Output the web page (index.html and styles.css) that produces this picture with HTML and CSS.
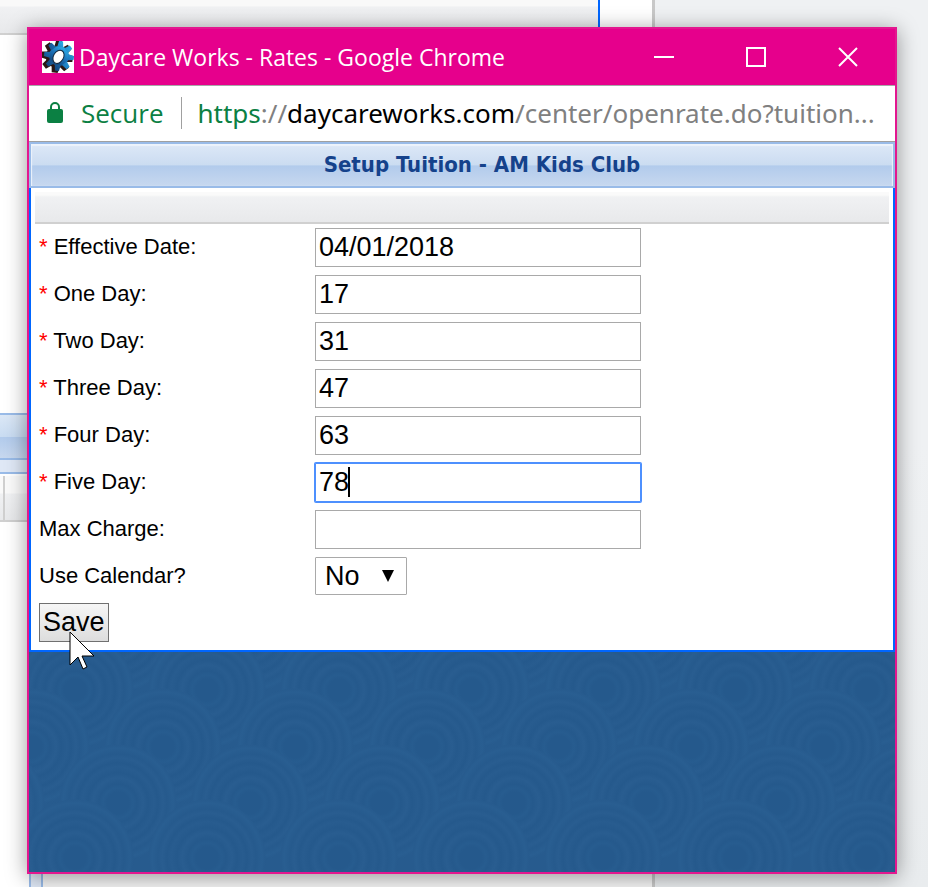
FILE: index.html
```html
<!DOCTYPE html>
<html lang="en">
<head>
    <meta charset="UTF-8">
    <meta name="viewport" content="width=device-width, initial-scale=1.0">
    <title>Daycare Works - Rates</title>
    <link rel="stylesheet" href="styles.css">
</head>
<body>
    <!-- Page behind the popup -->
    <div class="backdrop">
        <div class="back-page">
            <div class="back-top"></div>
            <div class="back-middle">
                <div class="back-header"></div>
                <div class="back-strip"></div>
                <div class="back-toolbar"></div>
            </div>
            <div class="back-bottom"></div>
        </div>
        <div class="back-side"></div>
    </div>

    <div class="window">
        <header class="title-bar">
            <svg class="app-icon" viewBox="0 0 32 32" aria-hidden="true">
                <defs>
                    <linearGradient id="gear" x1="0.8" y1="0" x2="0.3" y2="1">
                        <stop offset="0" stop-color="#2fb8f0"/>
                        <stop offset="0.5" stop-color="#1c72b8"/>
                        <stop offset="1" stop-color="#123f73"/>
                    </linearGradient>
                </defs>
                <rect width="32" height="32" fill="#fff"/>
                <g transform="translate(17 15) rotate(8)">
                    <g fill="#2b1714" transform="translate(-2 1)">
                        <circle r="11"/>
                        <path d="M-3-16H3L4-9H-4ZM-3 16H3L4 9H-4ZM-16-3V3L-9 4V-4ZM16-3V3L9 4V-4Z"/>
                        <path transform="rotate(45)" d="M-3-16H3L4-9H-4ZM-3 16H3L4 9H-4ZM-16-3V3L-9 4V-4ZM16-3V3L9 4V-4Z"/>
                    </g>
                    <g fill="url(#gear)">
                        <circle r="10"/>
                        <path d="M-2-15H2L3-9H-3ZM-2 15H2L3 9H-3ZM-15-2V2L-9 3V-3ZM15-2V2L9 3V-3Z"/>
                        <path transform="rotate(45)" d="M-2-15H2L3-9H-3ZM-2 15H2L3 9H-3ZM-15-2V2L-9 3V-3ZM15-2V2L9 3V-3Z"/>
                    </g>
                    <ellipse cx="0" cy="1" rx="5" ry="7" fill="#fff" stroke="#14283e" transform="rotate(22)"/>
                </g>
            </svg>
            <span class="window-title">Daycare Works - Rates - Google Chrome</span>
            <div class="window-buttons">
                <button type="button" aria-label="Minimize">
                    <svg viewBox="0 0 20 20"><path d="M0 10H20"/></svg>
                </button>
                <button type="button" aria-label="Maximize">
                    <svg viewBox="0 0 20 20"><path d="M1 1H19V19H1Z"/></svg>
                </button>
                <button type="button" aria-label="Close">
                    <svg viewBox="0 0 20 20"><path d="M1 1L19 19M19 1L1 19"/></svg>
                </button>
            </div>
        </header>

        <div class="address-bar">
            <button type="button" class="secure">
                <svg viewBox="0 0 16 22" aria-hidden="true">
                    <rect y="7" width="16" height="14" rx="2" fill="#0b8043"/>
                    <path d="M4 8V5a4 4 0 0 1 8 0V8" fill="none" stroke="#0b8043" stroke-width="2"/>
                </svg>
                Secure
            </button>
            <div class="url"><span class="scheme">https</span>://<span class="host">daycareworks.com</span>/center/openrate.do?tuition...</div>
        </div>

        <h1 class="panel-header">Setup Tuition - AM Kids Club</h1>

        <main class="panel">
            <div class="toolbar"></div>
            <form class="rates">
                <label for="effective"><span class="req">*</span> Effective Date:</label>
                <input type="text" id="effective" value="04/01/2018">

                <label for="day1"><span class="req">*</span> One Day:</label>
                <input type="text" id="day1" value="17">

                <label for="day2"><span class="req">*</span> Two Day:</label>
                <input type="text" id="day2" value="31">

                <label for="day3"><span class="req">*</span> Three Day:</label>
                <input type="text" id="day3" value="47">

                <label for="day4"><span class="req">*</span> Four Day:</label>
                <input type="text" id="day4" value="63">

                <label for="day5"><span class="req">*</span> Five Day:</label>
                <div class="field">
                    <input type="text" id="day5" class="active" value="78">
                    <span class="caret"></span>
                </div>

                <label for="max">Max Charge:</label>
                <input type="text" id="max">

                <label for="calendar">Use Calendar?</label>
                <div class="select">
                    <select id="calendar">
                        <option>No</option>
                        <option>Yes</option>
                    </select>
                    <svg class="arrow" viewBox="0 0 12 12" aria-hidden="true"><path d="M0 0H12L6 12Z"/></svg>
                </div>

                <div class="actions">
                    <button type="button" class="save">Save</button>
                    <svg class="cursor" viewBox="0 0 26 40" aria-hidden="true">
                        <path d="M1 1V34L9 26L14 38L18 36L13 25H25Z" fill="#fff" stroke="#000"/>
                    </svg>
                </div>
            </form>
        </main>

        <div class="pattern"></div>
    </div>
</body>
</html>
```
FILE: styles.css
```css
* {
    margin: 0;
    padding: 0;
    box-sizing: border-box;
}

body {
    font-family: "Liberation Sans", Arial, sans-serif;
    font-size: 22px;
    color: #000;
    background-color: #eff1f3;
    overflow: hidden;
}

/* Page behind the popup */
.backdrop {
    display: flex;
    height: 100vh;
}

.back-page {
    display: flex;
    flex-direction: column;
    width: 655px;
    background-color: #fff;
    border-right: 3px solid #c8c8c8;
}

.back-side {
    flex: 1;
    background: linear-gradient(#eff1f3 50%, #e9ecee);
}

.back-top {
    width: 600px;
    height: 35px;
    background: linear-gradient(#f9f9f9 6px, #f0f1f3 7px, #e8e9eb);
    border-right: 2px solid #0066ff;
    border-bottom: 2px solid #d0d0d0;
}

.back-middle {
    flex: 1;
    padding-top: 378px;
}

.back-header {
    height: 47px;
    background: linear-gradient(#dbe7f6, #c9dcf2 50%, #b2cbec 52%, #c7d8ef);
    border-top: 2px solid #99bbe8;
    border-bottom: 2px solid #99bbe8;
}

.back-strip {
    height: 14px;
    background-color: #dfe8f6;
    border-bottom: 2px solid #99bbe8;
}

.back-toolbar {
    height: 46px;
    margin-top: 2px;
    background: linear-gradient(90deg, transparent 3px, #d0d0d0 3px, #d0d0d0 5px, transparent 5px), linear-gradient(#fafafa 17px, #f0f1f3 18px, #e8e9eb);
    border-bottom: 2px solid #d0d0d0;
}

.back-bottom {
    height: 35px;
    margin-left: 29px;
    background: linear-gradient(90deg, #99bbe8 2px, #dfe8f6 2px, #dfe8f6 12px, #99bbe8 12px, #99bbe8 14px, #f5f5f5 14px);
}

/* Popup window */
.window {
    position: absolute;
    inset: 27px 31px 13px 27px;
    display: flex;
    flex-direction: column;
    border: 2px solid #e3178f;
    box-shadow: 0 3px 20px rgba(0, 0, 0, 0.4);
    background-color: #fff;
}

.title-bar {
    display: flex;
    align-items: center;
    height: 57px;
    padding-left: 13px;
    background-color: #e6008c;
    border-bottom: 1px solid #a8a8a8;
    color: #fff;
}

.app-icon {
    width: 32px;
    height: 32px;
    margin-right: 5px;
}

.window-title {
    flex: 1;
    font-family: "Open Sans", sans-serif;
    font-size: 23px;
    white-space: nowrap;
}

.window-buttons {
    display: flex;
    padding-right: 1px;
}

.window-buttons button {
    display: flex;
    align-items: center;
    justify-content: center;
    width: 92px;
    height: 54px;
    background: none;
    border: none;
}

.window-buttons svg {
    width: 20px;
    height: 20px;
    fill: none;
    stroke: #fff;
    stroke-width: 2;
}

.address-bar {
    display: flex;
    align-items: center;
    height: 56px;
    padding: 0 16px 2px 18px;
    border-bottom: 1px solid #a0a0a0;
    font-family: "Open Sans", sans-serif;
    font-size: 26px;
}

.secure {
    display: flex;
    align-items: center;
    gap: 18px;
    height: 32px;
    padding-right: 18px;
    background: none;
    border: none;
    border-right: 1px solid #a0a0a0;
    font: inherit;
    color: #0b8043;
}

.secure svg {
    width: 16px;
    height: 22px;
}

.url {
    padding-left: 15px;
    font-family: "Noto Sans", sans-serif;
    color: #808080;
    white-space: nowrap;
}

.scheme {
    color: #0b8043;
}

.host {
    color: #000;
}

.panel-header {
    height: 46px;
    padding-left: 40px;
    background: linear-gradient(#dde8f7, #cbdcf1 50%, #b2cbec 52%, #c7d8ef);
    border: 2px solid #99bbe8;
    box-shadow: inset 0 1px 1px 1px #edf3fb;
    color: #15428b;
    font-family: "DejaVu Sans Condensed", Tahoma, sans-serif;
    font-size: 22px;
    font-weight: bold;
    line-height: 42px;
    text-align: center;
}

.panel {
    padding: 4px 4px 8px;
    border: 2px solid #0066ff;
    border-top: none;
}

.toolbar {
    height: 32px;
    background: linear-gradient(#fafafa 3px, #f0f1f3 5px, #e8e9eb);
    border-bottom: 2px solid #d0d0d0;
}

.rates {
    display: grid;
    grid-template-columns: 276px minmax(0, 326px);
    gap: 8px 0;
    padding: 4px 4px 0;
}

.rates label {
    line-height: 38px;
}

.req {
    color: #ff0000;
}

.rates input {
    width: 100%;
    height: 39px;
    padding: 0 3px;
    border: 1px solid #a9a9a9;
    font-family: inherit;
    font-size: 27px;
    outline: none;
}

.rates input.active {
    border-color: #4d90fe;
    border-radius: 1px;
    box-shadow: 0 0 0 1px #4d90fe;
}

.field {
    position: relative;
}

.caret {
    position: absolute;
    top: 4px;
    left: 33px;
    width: 2px;
    height: 30px;
    background-color: #000;
}

.select {
    position: relative;
    width: 92px;
}

.select select {
    width: 100%;
    height: 38px;
    padding-left: 9px;
    appearance: none;
    background-color: #fff;
    border: 1px solid #a9a9a9;
    border-radius: 1px;
    font-family: inherit;
    font-size: 27px;
    color: #000;
}

.arrow {
    position: absolute;
    top: 13px;
    right: 13px;
    width: 12px;
    height: 12px;
    pointer-events: none;
}

.actions {
    position: relative;
    grid-column: 1 / -1;
    height: 39px;
}

.save {
    height: 39px;
    padding: 0 3px;
    background: linear-gradient(#f6f6f6, #dddddd);
    border: 1px solid #707070;
    font-family: inherit;
    font-size: 27px;
    color: #000;
}

.cursor {
    position: absolute;
    top: 28px;
    left: 30px;
    width: 26px;
    height: 40px;
}

/* Overlapping ringed circles, each row covering the one above */
.pattern {
    --rings: radial-gradient(circle at center, #25598c 11px, #275c8f 15px, #25598c 19px, #295d90 25px, #25598c 30px, #285c8f 36px, #25598c 40px, #295d90 45px, #265a8d 49px, #295e91 55px, #275b8e 58px, transparent 59px);
    flex: 1;
    background-color: #275b8e;
    background-image: var(--rings), var(--rings), var(--rings), var(--rings), var(--rings);
    background-repeat: repeat-x;
    background-size: 132px 132px;
    background-position: -20px 140px, 23px 85px, 68px 29px, 112px -28px, 23px -84px;
}
```
